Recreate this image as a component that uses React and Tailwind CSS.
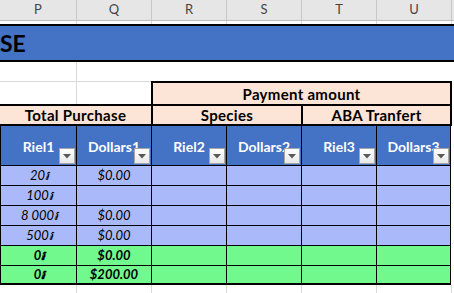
import React from "react";

const PEACH = "bg-[#fce4d6]";

function FilterButton() {
  return (
    <div className="absolute right-[1px] bottom-[1px] w-[16px] h-[16px] border border-[#a6a6a6] bg-gradient-to-b from-white to-[#e8e8e8] flex items-center justify-center">
      <svg width="8" height="5" viewBox="0 0 8 5">
        <path d="M0 0 L8 0 L4 4.5 Z" fill="#595959" />
      </svg>
    </div>
  );
}

function GridRow({ height }) {
  const cls = "border-r border-[#d9d9d9]";
  return (
    <div className={`flex ${height}`}>
      <div className={`w-[77px] shrink-0 ${cls}`} />
      <div className={`w-[75px] shrink-0 ${cls}`} />
      <div className={`w-[75px] shrink-0 ${cls}`} />
      <div className={`w-[75px] shrink-0 ${cls}`} />
      <div className={`w-[75px] shrink-0 ${cls}`} />
      <div className={`w-[75px] shrink-0 ${cls}`} />
      <div className="flex-1" />
    </div>
  );
}

const rows = [
  { riel: "20៛", usd: "$0.00", green: false },
  { riel: "100៛", usd: "", green: false },
  { riel: "8 000៛", usd: "$0.00", green: false },
  { riel: "500៛", usd: "$0.00", green: false },
  { riel: "0៛", usd: "$0.00", green: true },
  { riel: "0៛", usd: "$200.00", green: true, last: true },
];

function DataRow({ riel, usd, green, last }) {
  const bg = green ? "bg-[#72f98e] font-bold" : "bg-[#aab9f9]";
  const bottom = last ? "border-b-2 h-[19px]" : "border-b h-[20px]";
  const cell = `shrink-0 border-r border-black ${bottom} flex items-center justify-center`;
  return (
    <div className="flex italic text-[13px] text-black">
      <div className={`w-[77px] border-l border-l-black ${cell} ${bg}`}>
        <span className="pl-[2px]">{riel}</span>
      </div>
      <div className={`w-[75px] ${cell} ${bg}`}>{usd}</div>
      <div className={`w-[75px] ${cell} ${bg}`} />
      <div className={`w-[75px] ${cell} ${bg}`} />
      <div className={`w-[75px] ${cell} ${bg}`} />
      <div className={`w-[74px] ${cell} ${bg}`} />
      <div className="flex-1" />
    </div>
  );
}

export default function App() {
  const head = ["Riel1", "Dollars1", "Riel2", "Dollars2", "Riel3", "Dollars3"];
  const widths = ["w-[77px]", "w-[75px]", "w-[75px]", "w-[75px]", "w-[75px]", "w-[74px]"];
  return (
    <div
      className="w-[454px] h-[293px] overflow-hidden bg-white"
      style={{ fontFamily: '"Lato", "DejaVu Sans", sans-serif' }}
    >
      {/* column letters */}
      <div className="flex h-[21px] bg-[#e6e6e6] border-b border-[#bdbdbd] text-[13px] text-[#444]">
        {["P", "Q", "R", "S", "T", "U"].map((c, i) => (
          <div
            key={c}
            className={`${i === 0 ? "w-[77px]" : "w-[75px]"} shrink-0 border-r border-[#c8c8c8] flex items-center justify-center`}
          >
            {c}
          </div>
        ))}
        <div className="flex-1" />
      </div>
      <GridRow height="h-[3px]" />

      {/* banner */}
      <div className="h-[38px] border-y-2 border-black bg-[#4472c4] flex items-center">
        <span className="text-[23px] font-bold text-black leading-none">SE</span>
      </div>

      {/* empty row */}
      <div className="flex h-[19px]">
        <div className="w-[77px] shrink-0 border-r border-[#d9d9d9]" />
        <div className="w-[74px] shrink-0" />
        <div className="w-[301px] shrink-0" />
        <div className="flex-1" />
      </div>

      {/* payment amount */}
      <div className="flex h-[23px]">
        <div className="w-[77px] shrink-0 border-r border-[#d9d9d9] border-t border-t-[#d9d9d9]" />
        <div className="w-[74px] shrink-0 border-t border-t-[#d9d9d9]" />
        <div
          className={`w-[301px] shrink-0 border-2 border-b-0 border-black ${PEACH} flex items-center justify-center text-[15px] tracking-[0.3px] font-bold text-black pt-[1px]`}
        >
          Payment amount
        </div>
        <div className="flex-1" />
      </div>

      {/* group headers */}
      <div className="flex h-[22px] text-[15px] tracking-[0.3px] font-bold text-black">
        <div className={`w-[153px] shrink-0 border-y-2 border-r-2 border-black ${PEACH} flex items-center justify-center`}>
          Total Purchase
        </div>
        <div className={`w-[150px] shrink-0 border-y-2 border-r-2 border-black ${PEACH} flex items-center justify-center`}>
          Species
        </div>
        <div className={`w-[149px] shrink-0 border-y-2 border-r-2 border-black ${PEACH} flex items-center justify-center`}>
          ABA Tranfert
        </div>
        <div className="flex-1" />
      </div>

      {/* table headers */}
      <div className="flex h-[40px] text-[14px] font-bold text-white">
        {head.map((h, i) => (
          <div
            key={h}
            className={`${widths[i]} shrink-0 relative border-r border-b border-black bg-[#4472c4] flex items-center justify-center pt-[2px] ${i === 0 ? "border-l" : ""}`}
          >
            <span>{h}</span>
            <FilterButton />
          </div>
        ))}
        <div className="flex-1" />
      </div>

      {rows.map((r, i) => (
        <DataRow key={i} {...r} />
      ))}

      <GridRow height="h-[12px]" />
    </div>
  );
}
